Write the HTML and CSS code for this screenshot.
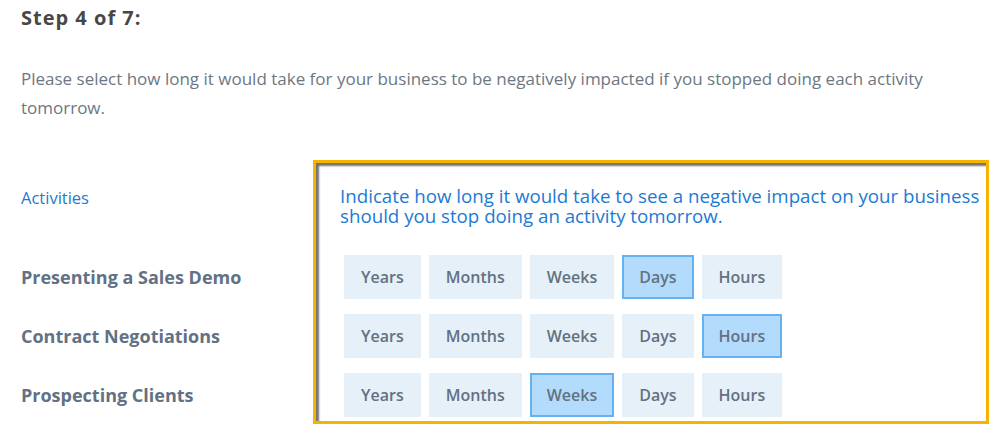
FILE: index.html
```html
<!DOCTYPE html>
<html lang="en">
<head>
    <meta charset="UTF-8">
    <meta name="viewport" content="width=device-width, initial-scale=1.0">
    <title>Step 4 of 7</title>
    <link rel="stylesheet" href="styles.css">
</head>
<body>
    <div class="page">
        <h2 class="step">Step 4 of 7:</h2>
        <p class="intro">Please select how long it would take for your business to be negatively impacted if you stopped doing each activity tomorrow.</p>

        <div class="survey">
            <!-- Columna de actividades -->
            <div class="labels">
                <div class="labels-head">Activities</div>
                <div class="label-rows">
                    <div class="label">Presenting a Sales Demo</div>
                    <div class="label">Contract Negotiations</div>
                    <div class="label">Prospecting Clients</div>
                </div>
            </div>

            <!-- Caja resaltada con las opciones -->
            <div class="box">
                <h3 class="box-title">Indicate how long it would take to see a negative impact on your business should you stop doing an activity tomorrow.</h3>
                <div class="option-rows">
                    <div class="options">
                        <button class="opt">Years</button>
                        <button class="opt">Months</button>
                        <button class="opt">Weeks</button>
                        <button class="opt selected">Days</button>
                        <button class="opt">Hours</button>
                    </div>
                    <div class="options">
                        <button class="opt">Years</button>
                        <button class="opt">Months</button>
                        <button class="opt">Weeks</button>
                        <button class="opt">Days</button>
                        <button class="opt selected">Hours</button>
                    </div>
                    <div class="options">
                        <button class="opt">Years</button>
                        <button class="opt">Months</button>
                        <button class="opt selected">Weeks</button>
                        <button class="opt">Days</button>
                        <button class="opt">Hours</button>
                    </div>
                </div>
            </div>
        </div>
    </div>
</body>
</html>
```

FILE: styles.css
```css
body {
    margin: 0;
    font-family: 'Open Sans', 'Noto Sans', sans-serif;
    background: #ffffff;
}

.page {
    padding: 6px 0 0 21px;
}

.step {
    margin: 0;
    font-size: 20px;
    line-height: 24px;
    font-weight: 700;
    color: #474747;
    letter-spacing: 1px;
}

.intro {
    margin: 34px 0 0;
    width: 950px;
    font-size: 17px;
    line-height: 29px;
    color: #6d7782;
}

/* Encuesta */
.survey {
    display: flex;
    margin-top: 38px;
}

.labels {
    width: 293px;
    padding-top: 26px;
}

.labels-head {
    height: 40px;
    line-height: 24px;
    font-size: 16.5px;
    font-weight: 500;
    color: #1c7ad4;
}

.label-rows {
    display: flex;
    flex-direction: column;
    gap: 15px;
    margin-top: 29px;
}

.label {
    height: 44px;
    display: flex;
    align-items: center;
    font-size: 18px;
    font-weight: 700;
    color: #627183;
}

.box {
    width: 648px;
    border: 3px solid #f6b400;
    padding: 23px 0 4px 24px;
    box-shadow: 3px 3px 2px rgba(0, 0, 0, 0.55), inset 3px 3px 2px rgba(0, 0, 0, 0.55);
}

.box-title {
    margin: 0;
    font-size: 18.7px;
    line-height: 20px;
    font-weight: 400;
    color: #1c7ad4;
}

.option-rows {
    display: flex;
    flex-direction: column;
    gap: 15px;
    margin: 29px 0 0 4px;
}

.options {
    display: flex;
    gap: 8px;
}

.opt {
    height: 44px;
    padding: 0 15px;
    font-family: inherit;
    font-size: 16px;
    font-weight: 600;
    color: #637182;
    background-color: #e5f0f8;
    border: 2px solid #e5f0f8;
    cursor: pointer;
}

.opt.selected {
    background-color: #b3dbfc;
    border-color: #66b1f2;
}
```
